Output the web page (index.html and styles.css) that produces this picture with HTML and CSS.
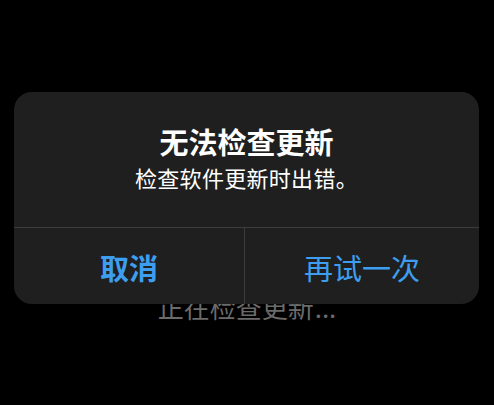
FILE: index.html
```html
<!DOCTYPE html>
<html lang="zh-CN">
<head>
<meta charset="utf-8">
<link rel="stylesheet" href="styles.css">
</head>
<body>
<div class="screen">
  <p class="status">正在检查更新<span class="dots">...</span></p>
  <div class="alert">
    <div class="alert-body">
      <h1 class="alert-title">无法检查更新</h1>
      <p class="alert-message">检查软件更新时出错。</p>
    </div>
    <div class="alert-actions">
      <div class="action action-cancel">取消</div>
      <div class="action action-retry">再试一次</div>
    </div>
  </div>
</div>
</body>
</html>
```
FILE: styles.css
```css
* { box-sizing: border-box; }
html, body {
  margin: 0;
  padding: 0;
  background: #000;
  width: 494px;
  height: 405px;
  overflow: hidden;
  font-family: "Noto Sans CJK SC", "Noto Sans", sans-serif;
}
.screen {
  position: relative;
  width: 494px;
  height: 405px;
  display: flex;
  flex-direction: column;
  align-items: center;
}
.status {
  margin: 0;
  padding-top: 291px;
  font-size: 26px;
  line-height: 32px;
  color: #6b6b6b;
  text-align: center;
}
.dots {
  letter-spacing: 0;
  margin-left: 1px;
}
.alert {
  position: absolute;
  left: 14px;
  top: 92px;
  width: 465px;
  height: 212px;
  background: #1f1f1f;
  border-radius: 18px;
  display: flex;
  flex-direction: column;
  overflow: hidden;
}
.alert-body {
  height: 136px;
  padding-top: 32px;
  display: flex;
  flex-direction: column;
  align-items: center;
  gap: 5px;
  border-bottom: 1px solid #3c3c3c;
}
.alert-title {
  margin: 0;
  font-size: 29px;
  line-height: 34px;
  font-weight: 700;
  color: #fff;
}
.alert-message {
  margin: 0;
  font-size: 22px;
  line-height: 28px;
  font-weight: 400;
  color: #fff;
  letter-spacing: 0.3px;
}
.alert-actions {
  flex: 1;
  display: grid;
  grid-template-columns: 231px 1fr;
}
.action {
  display: flex;
  align-items: center;
  justify-content: center;
  font-size: 29px;
  line-height: 36px;
  color: #3d9ef0;
  padding-top: 2px;
}
.action-cancel {
  font-weight: 700;
  border-right: 1px solid #3c3c3c;
}
.action-retry {
  font-weight: 400;
}
```
